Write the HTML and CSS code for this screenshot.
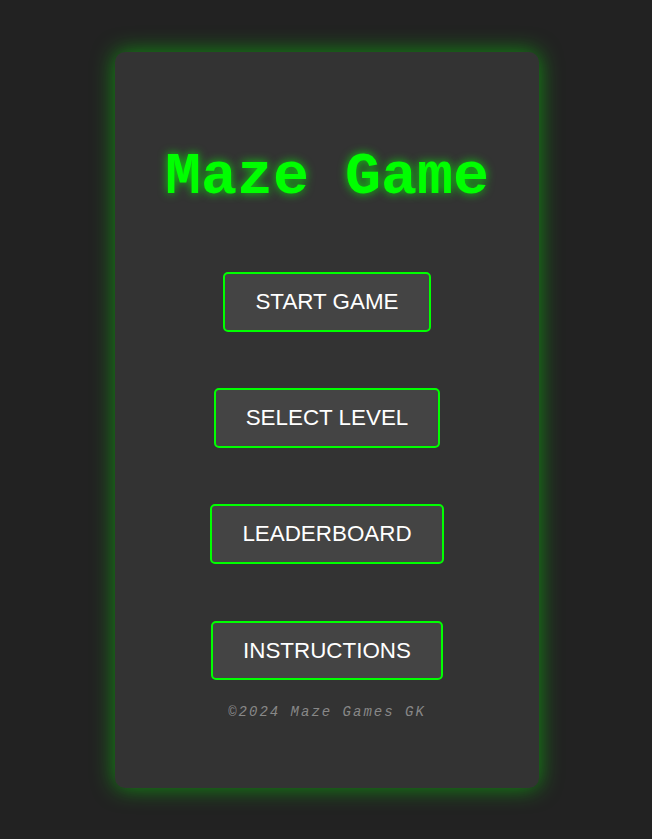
FILE: index.html
```html
<!DOCTYPE html>
<html>
<head>
<meta charset="utf-8">
<link rel="stylesheet" href="styles.css">
</head>
<body>
<div class="card">
  <h1 class="title">Maze Game</h1>
  <div class="menu">
    <button class="btn">START GAME</button>
    <button class="btn">SELECT LEVEL</button>
    <button class="btn">LEADERBOARD</button>
    <button class="btn">INSTRUCTIONS</button>
  </div>
  <p class="footer">©2024 Maze Games GK</p>
</div>
</body>
</html>
```
FILE: styles.css
```css
html, body {
  margin: 0;
  padding: 0;
  height: 100%;
}
body {
  background: #222;
  display: flex;
  align-items: center;
  justify-content: center;
  padding-left: 2px;
  box-sizing: border-box;
  font-family: "Liberation Sans", Arial, sans-serif;
}
.card {
  width: 424px;
  height: 736px;
  box-sizing: border-box;
  background: #333;
  border-radius: 10px;
  box-shadow: 0 0 22px rgba(0, 255, 0, 0.5);
  display: flex;
  flex-direction: column;
  align-items: center;
}
.title {
  margin: 91px 0 0;
  font-family: "Liberation Mono", "Courier New", monospace;
  font-weight: bold;
  font-size: 60px;
  line-height: 68px;
  color: #00ff00;
  text-shadow: 0 0 10px rgba(0, 255, 0, 0.8);
}
.menu {
  margin-top: 61.5px;
  display: flex;
  flex-direction: column;
  align-items: center;
  gap: 56.4px;
}
.btn {
  font-family: "Liberation Sans", Arial, sans-serif;
  font-size: 22.4px;
  line-height: 25.8px;
  color: #fff;
  background: #444;
  border: 2px solid #00ff00;
  border-radius: 5px;
  padding: 15px 30px;
  cursor: pointer;
}
.footer {
  margin: 24px 0 0;
  font-family: "Liberation Mono", "Courier New", monospace;
  font-style: italic;
  font-size: 14px;
  line-height: 16px;
  letter-spacing: 2px;
  color: #888;
}
```
